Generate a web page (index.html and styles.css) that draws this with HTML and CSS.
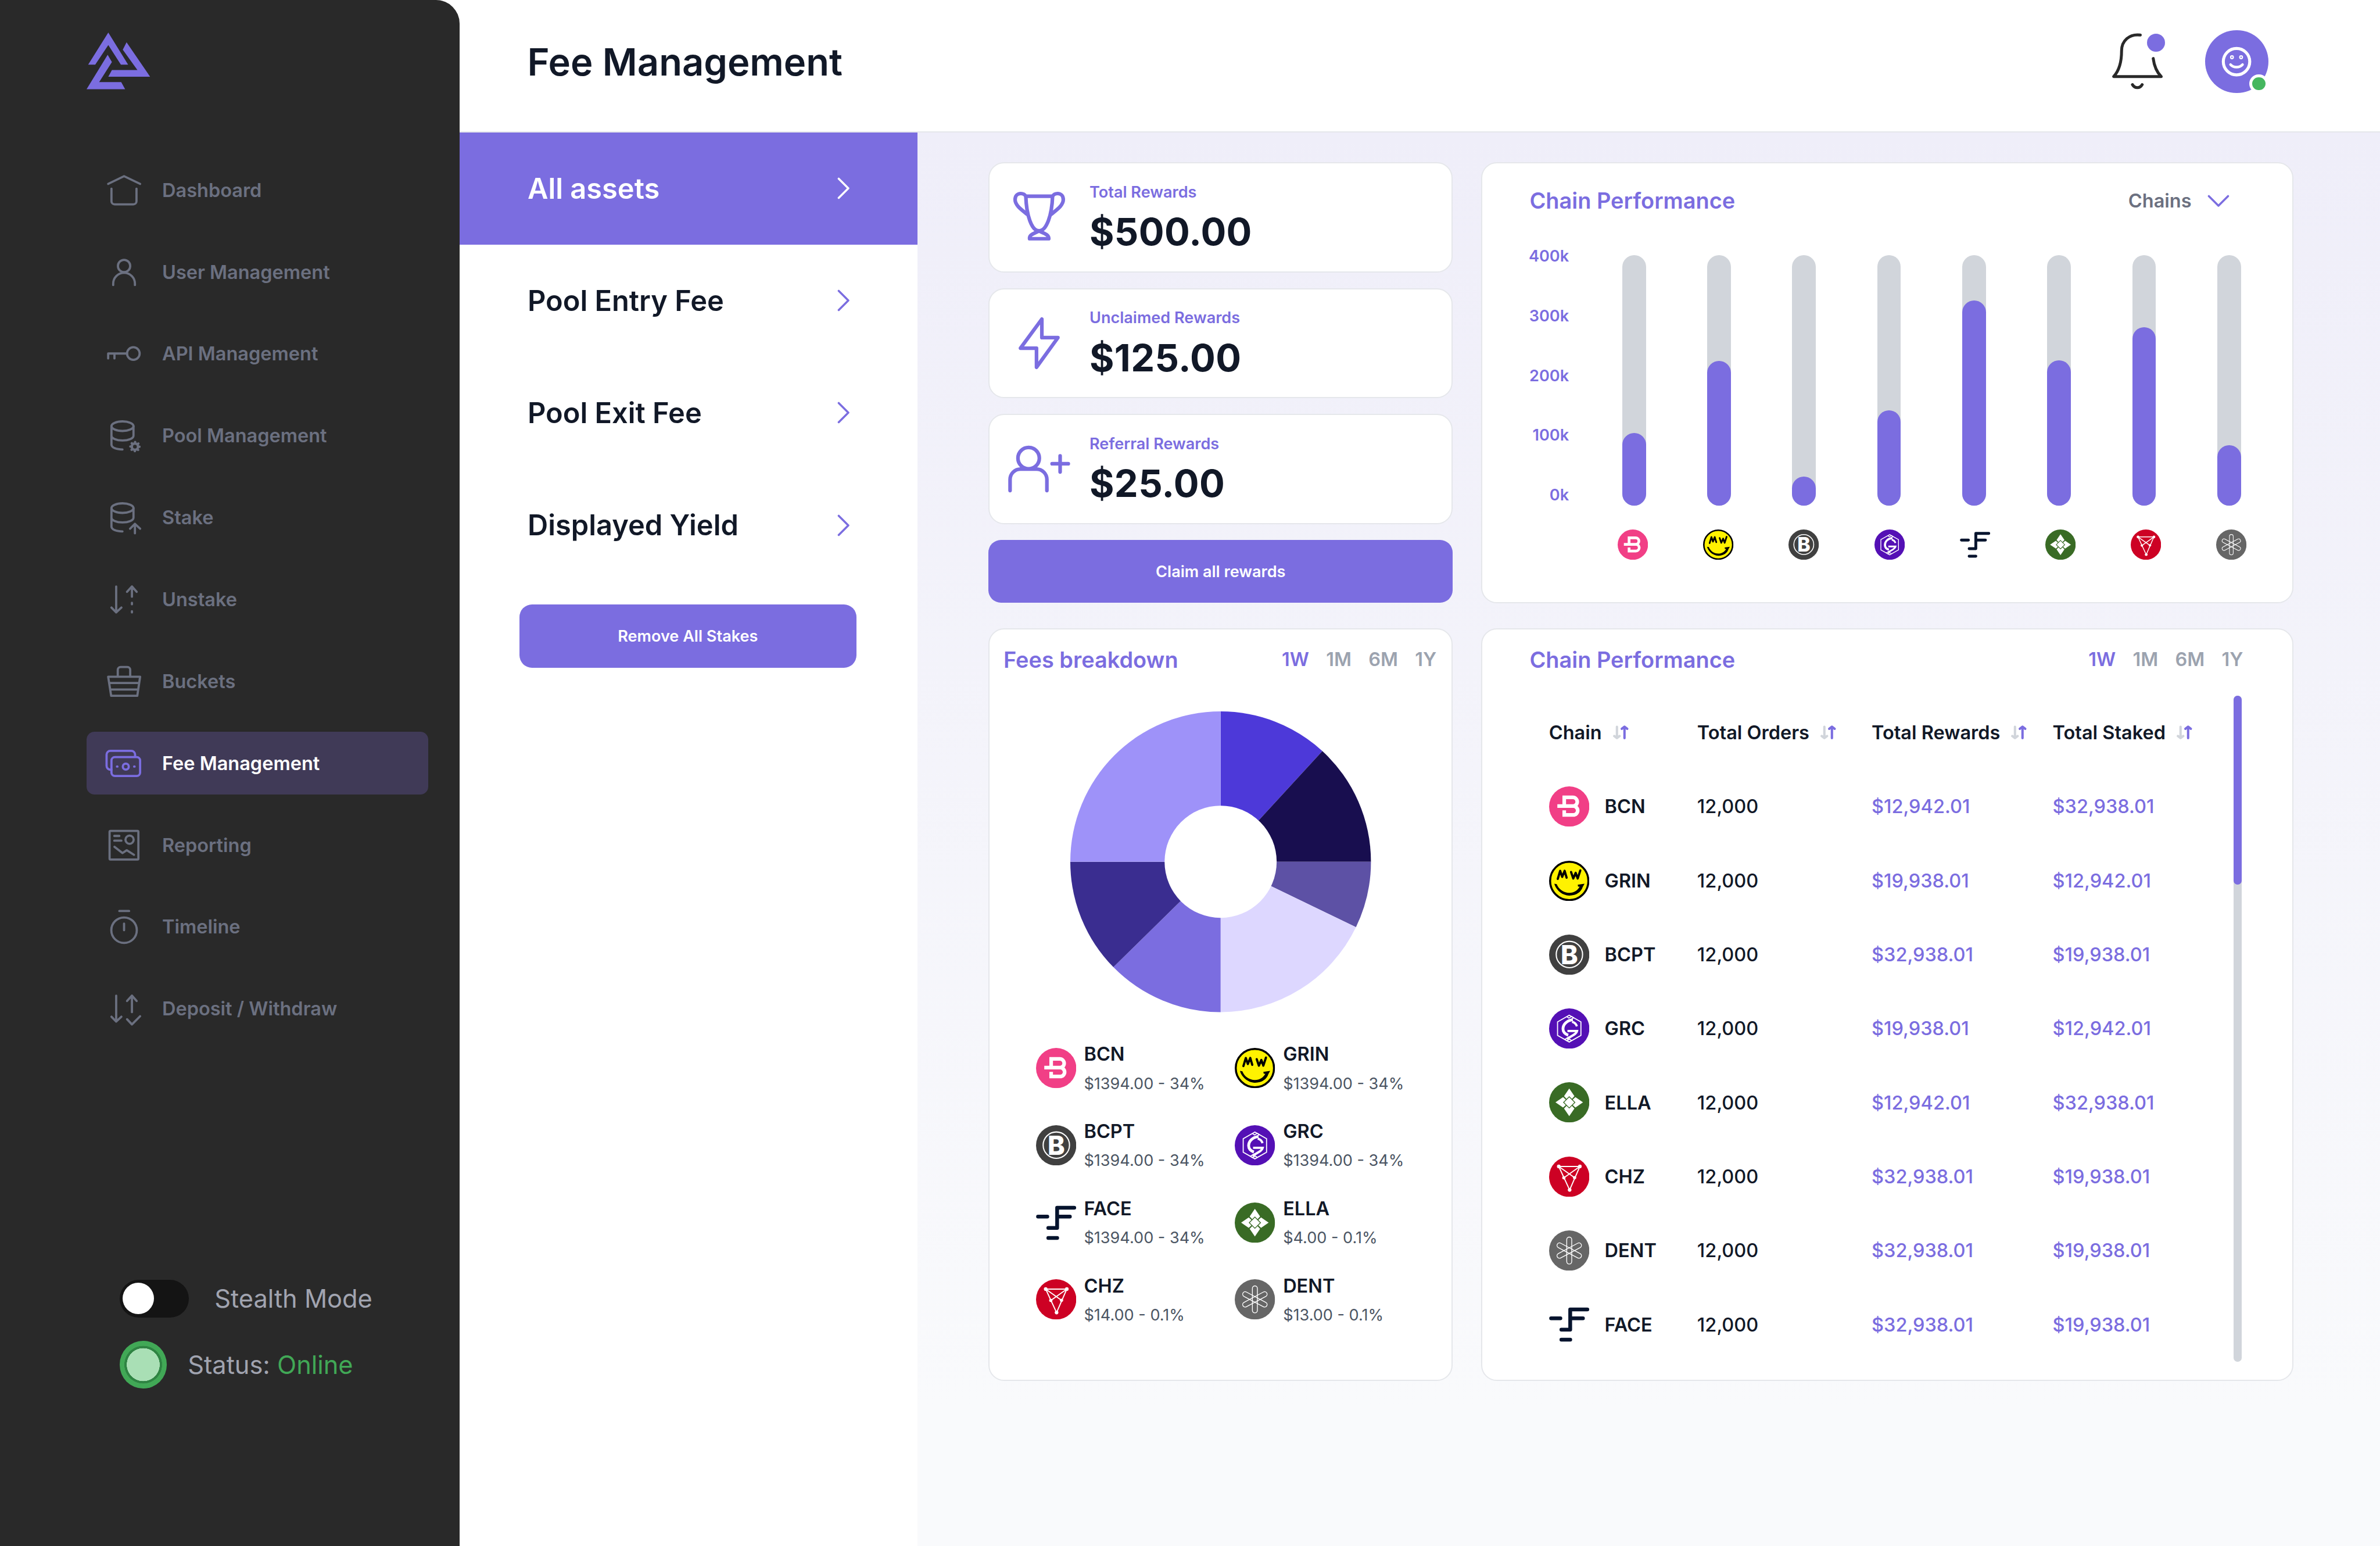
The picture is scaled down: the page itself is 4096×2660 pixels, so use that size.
FILE: index.html
```html
<!DOCTYPE html>
<html lang="en">
<head>
<meta charset="utf-8">
<title>Fee Management</title>
<link rel="stylesheet" href="styles.css">
</head>
<body>

<svg class="sprite" aria-hidden="true">
  <symbol id="i-home" viewBox="0 0 24 24"><path d="M1.9 7.9 12 3l10.2 4.9M4 10.9v8a2 2 0 0 0 2 2h11.9a2 2 0 0 0 2-2v-8"/></symbol>
  <symbol id="i-user" viewBox="0 0 24 24"><circle cx="12" cy="8" r="3.9"/><path d="M5.1 20.1v-.9a6.9 6.9 0 0 1 13.8 0v.9"/></symbol>
  <symbol id="i-key" viewBox="0 0 24 24"><circle cx="17.9" cy="11.9" r="4"/><path d="M13.9 11.9h-12V15M5.9 11.9V15"/></symbol>
  <symbol id="i-pool" viewBox="0 0 24 24"><ellipse cx="11" cy="6" rx="7" ry="3.05"/><path d="M4 6v11.7c0 1.9 3 3.1 7 3.1M18 6v6c0 1.8-3.1 3.1-7 3.1s-7-1.3-7-3.1"/><circle cx="18.9" cy="19" r="2" stroke-width="1.6"/><circle cx="18.9" cy="19" r="2.9" stroke-width="1.5" stroke-dasharray=".05 2.228"/></symbol>
  <symbol id="i-stake" viewBox="0 0 24 24"><ellipse cx="11" cy="6" rx="7" ry="3.05"/><path d="M4 6v11.7c0 1.9 3 3.1 7 3.1M18 6v6c0 1.8-3.1 3.1-7 3.1s-7-1.3-7-3.1M18.9 22v-6M15.8 19.1l3.1-3.1 3.3 3.1"/></symbol>
  <symbol id="i-unstake" viewBox="0 0 24 24"><path d="M7 3.7v16.5M4 17.1l3 3.1 3.3-3.1M17 10.2V3.7M13.9 7.1 17 3.7l3 3.4M17 14.1v.9M17 19.4v.8"/></symbol>
  <symbol id="i-bucket" viewBox="0 0 24 24"><path d="M8 9V4.6a1.8 1.8 0 0 1 1.8-1.8h4.3a1.8 1.8 0 0 1 1.8 1.8V9M1.9 9h20.3l-1.8 12.1H3.8zM2.6 13h18.9M3.2 17.1H21"/></symbol>
  <symbol id="i-fee" viewBox="0 0 24 24"><path d="M19 7.8V6.4A2.4 2.4 0 0 0 16.6 4H3.3A2.4 2.4 0 0 0 .9 6.4v7.2A2.4 2.4 0 0 0 3.3 16H4"/><rect x="4" y="8" width="18.2" height="12" rx="2.2"/><circle cx="13.1" cy="14" r="1.9"/><path d="M7.5 14h.3M18.4 14h.3"/></symbol>
  <symbol id="i-report" viewBox="0 0 24 24"><rect x="2.8" y="2.8" width="18.3" height="18.2" rx=".6"/><path d="M5.8 6h3.2M5.8 9h4.5M5.9 12.9l5.1 4 2.7-1.8 4.6 2.9"/><circle cx="15.5" cy="8.4" r="2.6"/></symbol>
  <symbol id="i-timer" viewBox="0 0 24 24"><circle cx="12" cy="14.2" r="8.1"/><path d="M9 2h6.2M12 10v4.2"/></symbol>
  <symbol id="i-deposit" viewBox="0 0 24 24"><path d="M7 3.7v16.5M4 17.1l3 3.1 3.3-3.1M17 14.2V3.7M13.9 7.1 17 3.7l3 3.4M13.9 18.7 17 22l5.2-5.2"/></symbol>
  <symbol id="i-chevron" viewBox="0 0 8 14"><path d="M.9.9 7 7 .9 13.1"/></symbol>
  <symbol id="i-sort" viewBox="0 0 10 9"><path class="sort-down" d="M2.5.9v7M.8 6.8l1.7 1.3 1.7-1.3"/><path class="sort-up" d="M7.3 8.1v-7M5.6 2.2 7.3.9 9 2.2"/></symbol>

  <symbol id="c-bcn" viewBox="0 0 100 100"><circle cx="50" cy="50" r="50" fill="#f13f86"/><path d="M37.6 46V27.3H59a10.8 10.8 0 0 1 0 21.7M20.5 49H60a11 11 0 0 1 0 22H37.6V59.500" fill="none" stroke="#fff" stroke-width="9"/></symbol>
  <symbol id="c-grin" viewBox="0 0 100 100"><circle cx="50" cy="50" r="47.5" fill="#fff200" stroke="#000" stroke-width="5"/><path d="M21.500 45 27.500 25l5 15 6-15 5 17M54.500 28l5.500 16 6-14 5 14 6.500-20" fill="none" stroke="#000" stroke-width="5.5" stroke-linecap="round" stroke-linejoin="round"/><path d="M13 57c3 13 18 29 37 29.500C68 86.500 80 77 83.500 65L88 57l-17 2.500 1 4.500h4C71 73 62 79.500 50 79.500 36 79.500 24 71 19 58z"/></symbol>
  <symbol id="c-bcpt" viewBox="0 0 100 100"><circle cx="50" cy="50" r="50" fill="#404040"/><circle cx="50.4" cy="49.5" r="32.7" fill="none" stroke="#fff" stroke-width="3"/><text class="coin-letter" x="29" y="73">B</text></symbol>
  <symbol id="c-grc" viewBox="0 0 100 100"><circle cx="50" cy="50" r="50" fill="#5410b5"/><g fill="none" stroke="#fff"><path stroke-width="2.6" d="M50 17 21 33.500v33.500L50 83.500l29-16.500V33.500z"/><path stroke-width="2.4" d="M44 20.500l5 3.500 7-4 5 3.500-10 6M56 80l-5-3.500-7 4-5-3.500 10-6"/><path stroke-width="7" d="M59 28C43 30.500 34.500 40 34.500 51c0 7 5 13 13 15.500"/><path stroke-width="5.5" d="M57 33.500c6.500 1.500 10 5 12 11M45.500 56h24C68 64 56 68 44 76"/></g></symbol>
  <symbol id="c-face" viewBox="0 0 100 100"><path d="M95 13H52.4v50H30.5M5 35h23M52.4 35H84M30.5 88h22" fill="none" stroke="#06142e" stroke-width="9.4" stroke-linecap="round" stroke-linejoin="round"/></symbol>
  <symbol id="c-ella" viewBox="0 0 100 100"><circle cx="50" cy="50" r="50" fill="#396b25"/><g fill="#fff" stroke="#396b25" stroke-width="2"><path d="M50 14 65 36 50 50 35 36zM86 50 64 65 50 50l14-15zM50 86 35 64l15-14 15 14zM14 50l22-15 14 15-14 15z"/><path d="M50 36 64 50 50 64 36 50z"/></g></symbol>
  <symbol id="c-chz" viewBox="0 0 100 100"><circle cx="50" cy="50" r="50" fill="#cd0124"/><path d="M24 24.5h52.4L51 82.7zM24 24.5l39.3 27.8M76.4 24.5 36.7 52.7" fill="none" stroke="#fff" stroke-width="2.8"/><g fill="#fff"><circle cx="24" cy="24.5" r="4.500"/><circle cx="76.4" cy="24.5" r="4.5"/><circle cx="51" cy="82.7" r="4.5"/><circle cx="36.7" cy="52.7" r="4"/><circle cx="63.3" cy="52.3" r="4"/></g></symbol>
  <symbol id="c-dent" viewBox="0 0 100 100"><circle cx="50" cy="50" r="50" fill="#666"/><g fill="none" stroke="#fff" stroke-width="2"><rect x="43.8" y="16.5" width="12.4" height="67" rx="6.2"/><rect x="43.8" y="16.5" width="12.4" height="67" rx="6.2" transform="rotate(62 50 50)"/><rect x="43.8" y="16.5" width="12.4" height="67" rx="6.2" transform="rotate(-62 50 50)"/></g></symbol>
</svg>

<aside class="sidebar">
  <svg class="logo" viewBox="0 0 40.4 36"><path d="M13.800 0 26.400 20.400H21.800L13.800 7.900 5.500 20.400H1zM25.400 6.200l15 21.900H13.800l2.300-4.300h16.200L23 10.900zM13.400 14.100l2.700 4.600L8 31.500h14l2.500 4.500H0z"/></svg>
  <nav class="nav">
    <a class="nav-item"><svg class="nav-icon"><use href="#i-home"/></svg><span>Dashboard</span></a>
    <a class="nav-item"><svg class="nav-icon"><use href="#i-user"/></svg><span>User Management</span></a>
    <a class="nav-item"><svg class="nav-icon"><use href="#i-key"/></svg><span>API Management</span></a>
    <a class="nav-item"><svg class="nav-icon"><use href="#i-pool"/></svg><span>Pool Management</span></a>
    <a class="nav-item"><svg class="nav-icon"><use href="#i-stake"/></svg><span>Stake</span></a>
    <a class="nav-item"><svg class="nav-icon"><use href="#i-unstake"/></svg><span>Unstake</span></a>
    <a class="nav-item"><svg class="nav-icon"><use href="#i-bucket"/></svg><span>Buckets</span></a>
    <a class="nav-item active"><svg class="nav-icon"><use href="#i-fee"/></svg><span>Fee Management</span></a>
    <a class="nav-item"><svg class="nav-icon"><use href="#i-report"/></svg><span>Reporting</span></a>
    <a class="nav-item"><svg class="nav-icon"><use href="#i-timer"/></svg><span>Timeline</span></a>
    <a class="nav-item"><svg class="nav-icon"><use href="#i-deposit"/></svg><span>Deposit / Withdraw</span></a>
  </nav>
  <div class="sidebar-foot">
    <div class="foot-row stealth"><span class="toggle"><span class="knob"></span></span><span>Stealth Mode</span></div>
    <div class="foot-row status"><span class="status-light"></span><span>Status: <b class="online">Online</b></span></div>
  </div>
</aside>

<div class="page">
  <header class="topbar">
    <h1>Fee Management</h1>
    <div class="topbar-actions">
      <div class="bell">
        <svg viewBox="0 0 32 36"><path d="M17.9 1.2C11 .3 6 4.8 6 11.3c0 7.2-1.6 12.6-5 16.3h30.2c-2.9-2.9-4.5-6.8-5.1-11.500M12.900 32.700c1.600 2.600 4.700 2.600 6.200 0"/></svg>
        <span class="bell-dot"></span>
      </div>
      <div class="avatar">
        <svg viewBox="0 0 20 20"><circle cx="10" cy="10" r="8.4" stroke-width="1.9"/><circle cx="7.1" cy="7.2" r=".85" stroke-width=".8"/><circle cx="12.9" cy="7.2" r=".85" stroke-width=".8"/><path d="M6.2 11.9c2 2.100 5.600 2.100 7.600 0" stroke-width="1.7"/></svg>
        <span class="presence"></span>
      </div>
    </div>
  </header>

  <div class="body">
    <section class="panel">
      <a class="panel-item active"><span>All assets</span><svg class="chev"><use href="#i-chevron"/></svg></a>
      <a class="panel-item"><span>Pool Entry Fee</span><svg class="chev"><use href="#i-chevron"/></svg></a>
      <a class="panel-item"><span>Pool Exit Fee</span><svg class="chev"><use href="#i-chevron"/></svg></a>
      <a class="panel-item"><span>Displayed Yield</span><svg class="chev"><use href="#i-chevron"/></svg></a>
      <button class="btn remove">Remove All Stakes</button>
    </section>

    <main class="content">
      <div class="stats">
        <div class="card stat">
          <svg class="stat-icon" viewBox="0 0 40 40"><path d="M11.600 6.500h17c-.4 12-3.800 22-8.600 22s-8-10-8.400-22zM11.600 6.500C10.900 5.300 9.700 4.800 8.400 4.800 6.200 4.800 4.800 6.300 4.800 8.700c0 3.600 4 6.300 7.700 9.300M28.600 6.500c.7-1.200 1.900-1.700 3.200-1.700 2.200 0 3.600 1.500 3.600 3.900 0 3.600-4 6.300-7.700 9.300M14 33.500h12.200c0-2.800-3-3.200-6.200-5-3.200 1.800-6.200 2.200-6 5z"/></svg>
          <div class="stat-text"><span class="stat-label">Total Rewards</span><span class="stat-value">$500.00</span></div>
        </div>
        <div class="card stat">
          <svg class="stat-icon" viewBox="0 0 40 40"><path d="M21.800 4.800v11.800H32L18.400 35.400V23.300H8.200z"/></svg>
          <div class="stat-text"><span class="stat-label">Unclaimed Rewards</span><span class="stat-value">$125.00</span></div>
        </div>
        <div class="card stat">
          <svg class="stat-icon" viewBox="0 0 40 40"><circle cx="13.4" cy="13" r="6.8"/><path d="M1.600 33.600v-7A6.600 6.600 0 0 1 8.200 20h10.200a6.600 6.600 0 0 1 6.600 6.600v7M28.300 16.600h10.300M33.400 11.600v10.200"/></svg>
          <div class="stat-text"><span class="stat-label">Referral Rewards</span><span class="stat-value">$25.00</span></div>
        </div>
        <button class="btn">Claim all rewards</button>
      </div>

      <div class="card chart">
        <div class="card-head"><h2>Chain Performance</h2><div class="select"><span>Chains</span><svg viewBox="0 0 14 8"><path d="M.9.9 7 7 13.1.9"/></svg></div></div>
        <div class="chart-body">
          <div class="axis"><span>400k</span><span>300k</span><span>200k</span><span>100k</span><span>0k</span></div>
          <div class="plot">
            <div class="bars">
              <span class="bar"><span class="fill" style="height:28.9%"></span></span>
              <span class="bar"><span class="fill" style="height:57.9%"></span></span>
              <span class="bar"><span class="fill" style="height:11.7%"></span></span>
              <span class="bar"><span class="fill" style="height:38.1%"></span></span>
              <span class="bar"><span class="fill" style="height:82%"></span></span>
              <span class="bar"><span class="fill" style="height:58%"></span></span>
              <span class="bar"><span class="fill" style="height:71.3%"></span></span>
              <span class="bar"><span class="fill" style="height:24.2%"></span></span>
            </div>
            <div class="bar-icons">
              <svg class="coin-sm"><use href="#c-bcn"/></svg>
              <svg class="coin-sm"><use href="#c-grin"/></svg>
              <svg class="coin-sm"><use href="#c-bcpt"/></svg>
              <svg class="coin-sm"><use href="#c-grc"/></svg>
              <svg class="coin-sm"><use href="#c-face"/></svg>
              <svg class="coin-sm"><use href="#c-ella"/></svg>
              <svg class="coin-sm"><use href="#c-chz"/></svg>
              <svg class="coin-sm"><use href="#c-dent"/></svg>
            </div>
          </div>
        </div>
      </div>

      <div class="card fees">
        <div class="card-head"><h2>Fees breakdown</h2><div class="tabs"><span class="on">1W</span><span>1M</span><span>6M</span><span>1Y</span></div></div>
        <svg class="pie" viewBox="-95.5 -95.5 191 191">
          <path fill="#4d39d9" d="M0 0V-95.500A95.500 95.500 0 0 1 64.640-70.300z"/>
          <path fill="#180e4f" d="M0 0 64.640-70.300A95.500 95.500 0 0 1 95.500 0z"/>
          <path fill="#5d51a5" d="M0 0H95.500A95.500 95.500 0 0 1 85.980 41.560z"/>
          <path fill="#ddd7ff" d="M0 0 85.980 41.560A95.500 95.500 0 0 1 0 95.500z"/>
          <path fill="#7b6de0" d="M0 0V95.500A95.500 95.500 0 0 1-68.120 66.940z"/>
          <path fill="#3a2d90" d="M0 0-68.120 66.940A95.500 95.500 0 0 1-95.500 0z"/>
          <path fill="#9e92f9" d="M0 0H-95.500A95.500 95.500 0 0 1 0-95.500z"/>
          <circle r="35.6" fill="#fff"/>
        </svg>
        <div class="legend">
          <div class="legend-item"><svg class="coin"><use href="#c-bcn"/></svg><div><b>BCN</b><span>$1394.00 - 34%</span></div></div>
          <div class="legend-item"><svg class="coin"><use href="#c-grin"/></svg><div><b>GRIN</b><span>$1394.00 - 34%</span></div></div>
          <div class="legend-item"><svg class="coin"><use href="#c-bcpt"/></svg><div><b>BCPT</b><span>$1394.00 - 34%</span></div></div>
          <div class="legend-item"><svg class="coin"><use href="#c-grc"/></svg><div><b>GRC</b><span>$1394.00 - 34%</span></div></div>
          <div class="legend-item"><svg class="coin"><use href="#c-face"/></svg><div><b>FACE</b><span>$1394.00 - 34%</span></div></div>
          <div class="legend-item"><svg class="coin"><use href="#c-ella"/></svg><div><b>ELLA</b><span>$4.00 - 0.1%</span></div></div>
          <div class="legend-item"><svg class="coin"><use href="#c-chz"/></svg><div><b>CHZ</b><span>$14.00 - 0.1%</span></div></div>
          <div class="legend-item"><svg class="coin"><use href="#c-dent"/></svg><div><b>DENT</b><span>$13.00 - 0.1%</span></div></div>
        </div>
      </div>

      <div class="card chains">
        <div class="card-head"><h2>Chain Performance</h2><div class="tabs"><span class="on">1W</span><span>1M</span><span>6M</span><span>1Y</span></div></div>
        <div class="table-wrap">
          <table>
            <colgroup><col class="col-chain"><col class="col-orders"><col class="col-rewards"><col class="col-staked"></colgroup>
            <thead>
              <tr>
                <th><div class="th"><span>Chain</span><svg class="sort"><use href="#i-sort"/></svg></div></th>
                <th><div class="th"><span>Total Orders</span><svg class="sort"><use href="#i-sort"/></svg></div></th>
                <th><div class="th"><span>Total Rewards</span><svg class="sort"><use href="#i-sort"/></svg></div></th>
                <th><div class="th"><span>Total Staked</span><svg class="sort"><use href="#i-sort"/></svg></div></th>
              </tr>
            </thead>
            <tbody>
              <tr><td><div class="chain"><svg class="coin"><use href="#c-bcn"/></svg><b>BCN</b></div></td><td>12,000</td><td class="money">$12,942.01</td><td class="money">$32,938.01</td></tr>
              <tr><td><div class="chain"><svg class="coin"><use href="#c-grin"/></svg><b>GRIN</b></div></td><td>12,000</td><td class="money">$19,938.01</td><td class="money">$12,942.01</td></tr>
              <tr><td><div class="chain"><svg class="coin"><use href="#c-bcpt"/></svg><b>BCPT</b></div></td><td>12,000</td><td class="money">$32,938.01</td><td class="money">$19,938.01</td></tr>
              <tr><td><div class="chain"><svg class="coin"><use href="#c-grc"/></svg><b>GRC</b></div></td><td>12,000</td><td class="money">$19,938.01</td><td class="money">$12,942.01</td></tr>
              <tr><td><div class="chain"><svg class="coin"><use href="#c-ella"/></svg><b>ELLA</b></div></td><td>12,000</td><td class="money">$12,942.01</td><td class="money">$32,938.01</td></tr>
              <tr><td><div class="chain"><svg class="coin"><use href="#c-chz"/></svg><b>CHZ</b></div></td><td>12,000</td><td class="money">$32,938.01</td><td class="money">$19,938.01</td></tr>
              <tr><td><div class="chain"><svg class="coin"><use href="#c-dent"/></svg><b>DENT</b></div></td><td>12,000</td><td class="money">$32,938.01</td><td class="money">$19,938.01</td></tr>
              <tr><td><div class="chain"><svg class="coin"><use href="#c-face"/></svg><b>FACE</b></div></td><td>12,000</td><td class="money">$32,938.01</td><td class="money">$19,938.01</td></tr>
            </tbody>
          </table>
          <div class="scrollbar"><span class="thumb"></span></div>
        </div>
      </div>
    </main>
  </div>
</div>
</body>
</html>
```
FILE: styles.css
```css
/* 1rem = 10 layout units; the layout is 1512 units wide. */
html {
  font-size: calc(100vw / 151.2);
}

* {
  box-sizing: border-box;
}

body {
  margin: 0;
  display: flex;
  height: 100vh;
  overflow: hidden;
  background: #fff;
  color: #111827;
  font-family: Inter, "Liberation Sans", sans-serif;
  font-size: 1.2rem;
}

svg {
  display: block;
  flex: none;
}

h1,
h2 {
  margin: 0;
  font-weight: 600;
}

.sprite {
  display: none;
}

/* Sidebar */
.sidebar {
  flex: none;
  width: 29.2rem;
  padding: 2.08rem 2rem 0 5.5rem;
  background: #292929;
  border-top-right-radius: 1.5rem;
}

.logo {
  width: 4.04rem;
  height: 3.6rem;
  fill: #7b6de0;
}

.nav {
  display: flex;
  flex-direction: column;
  gap: 1.2rem;
  margin-top: 4.4rem;
}

.nav-item {
  display: flex;
  align-items: center;
  gap: 1.2rem;
  height: 4rem;
  padding: 0 1.2rem;
  border-radius: 0.5rem;
  color: #6b7080;
  font-weight: 600;
}

.nav-icon {
  width: 2.4rem;
  height: 2.4rem;
  fill: none;
  stroke: currentColor;
  stroke-width: 1.4;
  stroke-linecap: round;
  stroke-linejoin: round;
}

.nav-item.active {
  background: #403a57;
  color: #fff;
}

.nav-item.active .nav-icon {
  stroke: #7b6de0;
}

.sidebar-foot {
  display: flex;
  flex-direction: column;
  gap: 1.5rem;
  margin-top: 15.2rem;
  padding-left: 2.1rem;
  color: #a1a4b0;
  font-size: 1.6rem;
}

.foot-row {
  display: flex;
  align-items: center;
}

.stealth {
  gap: 1.63rem;
  height: 2.4rem;
}

.status {
  gap: 1.33rem;
  height: 3rem;
}

.toggle {
  display: flex;
  align-items: center;
  width: 4.4rem;
  height: 2.4rem;
  padding: 0.2rem;
  border-radius: 1.2rem;
  background: #141414;
}

.knob {
  width: 2rem;
  height: 2rem;
  border-radius: 50%;
  background: #fff;
}

.status-light {
  width: 3rem;
  height: 3rem;
  border-radius: 50%;
  background: radial-gradient(circle closest-side, #a9dfb5 69.5%, #2f8443 70.5%, #2f8443 79.5%, #41a856 80.5%);
}

.online {
  color: #41a856;
  font-weight: 400;
}

/* Top bar */
.page {
  flex: 1;
  display: flex;
  flex-direction: column;
}

.topbar {
  display: flex;
  align-items: center;
  justify-content: space-between;
  height: 8.4rem;
  padding: 0 7.1rem 0.5rem 4.3rem;
  border-bottom: 0.1rem solid #e5e7eb;
  background: #fff;
}

h1 {
  font-size: 2.4rem;
}

.topbar-actions {
  display: flex;
  align-items: center;
  gap: 2.7rem;
}

.bell {
  position: relative;
  width: 3.2rem;
  height: 3.6rem;
}

.bell svg {
  width: 100%;
  height: 100%;
  fill: none;
  stroke: #292929;
  stroke-width: 1.85;
  stroke-linecap: round;
  stroke-linejoin: round;
}

.bell-dot {
  position: absolute;
  left: 2.18rem;
  top: 0.03rem;
  width: 1.15rem;
  height: 1.15rem;
  border-radius: 50%;
  background: #7b6de0;
}

.avatar {
  position: relative;
  display: grid;
  place-items: center;
  width: 4rem;
  height: 4rem;
  border-radius: 50%;
  background: #7b6de0;
}

.avatar svg {
  width: 2rem;
  height: 2rem;
  fill: none;
  stroke: #fff;
  stroke-linecap: round;
}

.presence {
  position: absolute;
  right: 0;
  bottom: 0;
  width: 1.2rem;
  height: 1.2rem;
  border: 0.2rem solid #fff;
  border-radius: 50%;
  background: #45b75f;
}

.body {
  flex: 1;
  display: flex;
}

/* Category panel */
.panel {
  flex: none;
  display: flex;
  flex-direction: column;
  width: 29.1rem;
  background: #fff;
}

.panel-item {
  display: flex;
  align-items: center;
  justify-content: space-between;
  height: 7.13rem;
  padding: 0 4.3rem 0 4.32rem;
  font-size: 1.8rem;
  font-weight: 600;
}

.chev {
  width: 0.8rem;
  height: 1.4rem;
  fill: none;
  stroke: #7b6de0;
  stroke-width: 1.3;
  stroke-linecap: round;
  stroke-linejoin: round;
}

.panel-item.active {
  background: #7b6de0;
  color: #fff;
}

.panel-item.active .chev {
  stroke: #fff;
}

.btn {
  height: 4rem;
  padding: 0.04rem 0 0;
  border: 0;
  border-radius: 0.8rem;
  background: #7b6de0;
  color: #fff;
  font: 600 1rem Inter, "Liberation Sans", sans-serif;
}

.remove {
  margin: 1.48rem 3.9rem 0 3.8rem;
}

/* Content */
.content {
  flex: 1;
  display: grid;
  grid-template-columns: 29.5rem 51.6rem;
  grid-template-rows: 28rem 47.8rem;
  gap: 1.6rem 1.8rem;
  padding: 1.9rem 0 0 4.5rem;
  background: linear-gradient(#efeef9, #f9fafc 90%);
}

.card {
  border: 0.1rem solid #e5e7eb;
  border-radius: 1rem;
  background: #fff;
}

.stats {
  display: flex;
  flex-direction: column;
  gap: 1rem;
}

.stat {
  display: flex;
  align-items: center;
  gap: 1.22rem;
  height: 7rem;
  padding-left: 1.12rem;
}

.stat-icon {
  width: 4rem;
  height: 4rem;
  fill: none;
  stroke: #7b6de0;
  stroke-width: 2.3;
  stroke-linecap: round;
  stroke-linejoin: round;
}

.stat-text {
  display: flex;
  flex-direction: column;
  gap: 0.6rem;
  padding-bottom: 0.19rem;
}

.stat-label {
  color: #7b6de0;
  font-size: 1rem;
  font-weight: 600;
  line-height: 1.4rem;
}

.stat-value {
  font-size: 2.4rem;
  font-weight: 700;
  letter-spacing: 0.013rem;
  line-height: 2.4rem;
}

.card-head {
  display: flex;
  align-items: center;
  justify-content: space-between;
  height: 2rem;
}

h2 {
  color: #7b6de0;
  font-size: 1.4rem;
}

/* Bar chart */
.chart {
  padding: 1.38rem 4rem 0 3rem;
}

.select {
  display: flex;
  align-items: center;
  gap: 1rem;
  color: #6b7080;
  font-weight: 600;
}

.select svg {
  width: 1.4rem;
  height: 0.8rem;
  fill: none;
  stroke: #7b6de0;
  stroke-width: 1.3;
  stroke-linecap: round;
  stroke-linejoin: round;
}

.chart-body {
  display: flex;
  gap: 3.1rem;
  margin-top: 1.85rem;
}

.axis {
  display: flex;
  flex-direction: column;
  justify-content: space-between;
  align-items: flex-end;
  width: 2.5rem;
  height: 16.5rem;
  color: #7b6de0;
  font-size: 1rem;
  font-weight: 600;
  line-height: 1.3rem;
}

.plot {
  flex: none;
  width: 39.96rem;
  margin-top: 0.61rem;
}

.bars {
  display: flex;
  justify-content: space-between;
  height: 15.9rem;
  padding: 0 0.37rem 0 0.29rem;
}

.bar {
  display: flex;
  align-items: flex-end;
  width: 1.5rem;
  border-radius: 0.75rem;
  background: #d1d5db;
}

.fill {
  width: 100%;
  border-radius: 0.75rem;
  background: #7b6de0;
}

.bar-icons {
  display: flex;
  justify-content: space-between;
  margin-top: 1.5rem;
}

.coin-sm {
  width: 1.93rem;
  height: 1.93rem;
}

.coin {
  width: 2.56rem;
  height: 2.56rem;
}

.coin-letter {
  fill: #fff;
  font: 800 64.5px Inter, "Liberation Sans", sans-serif;
}

/* Fees breakdown */
.fees {
  padding: 0.92rem 0.97rem 0 0.88rem;
}

.tabs {
  display: flex;
  gap: 1.08rem;
  color: #9ca3af;
  font-weight: 600;
}

.tabs .on {
  color: #7b6de0;
}

.pie {
  width: 19.1rem;
  height: 19.1rem;
  margin: 2.3rem 0 0 4.25rem;
}

.legend {
  display: grid;
  grid-template-columns: 12.65rem 12.65rem;
  grid-auto-rows: 4.9rem;
  margin: 1.1rem 0 0 2.05rem;
}

.legend-item {
  display: flex;
  align-items: center;
  gap: 0.5rem;
}

.legend-item div {
  display: flex;
  flex-direction: column;
  padding-top: 0.14rem;
  line-height: 1.86rem;
}

.legend-item span {
  color: #4b5563;
  font-size: 1rem;
  font-weight: 400;
}

b {
  font-weight: 600;
}

/* Chain table */
.chains {
  padding: 0.92rem 3.12rem 0 3rem;
}

.table-wrap {
  display: flex;
  margin: 1.29rem 0 0 1.23rem;
}

table {
  flex: none;
  table-layout: fixed;
  width: 43.5rem;
  border-collapse: collapse;
}

.col-chain {
  width: 9.42rem;
}

.col-orders {
  width: 11.08rem;
}

.col-rewards {
  width: 11.5rem;
}

.col-staked {
  width: 11.5rem;
}

tr {
  height: 4.7rem;
}

th,
td {
  padding: 0;
  text-align: left;
  font-weight: 500;
}

th {
  font-weight: 600;
}

.th,
.chain {
  display: flex;
  align-items: center;
}

.th {
  gap: 0.7rem;
}

.chain {
  gap: 0.98rem;
}

.money {
  color: #7b6de0;
}

.sort {
  width: 1rem;
  height: 0.9rem;
  fill: none;
  stroke-width: 1.5;
  stroke-linecap: round;
  stroke-linejoin: round;
}

.sort-down {
  stroke: #d1d5db;
}

.sort-up {
  stroke: #7b6de0;
}

.scrollbar {
  flex: none;
  width: 0.5rem;
  height: 42.3rem;
  border-radius: 0.25rem;
  background: #d1d5db;
}

.thumb {
  display: block;
  height: 12rem;
  border-radius: 0.25rem;
  background: #7b6de0;
}
```
